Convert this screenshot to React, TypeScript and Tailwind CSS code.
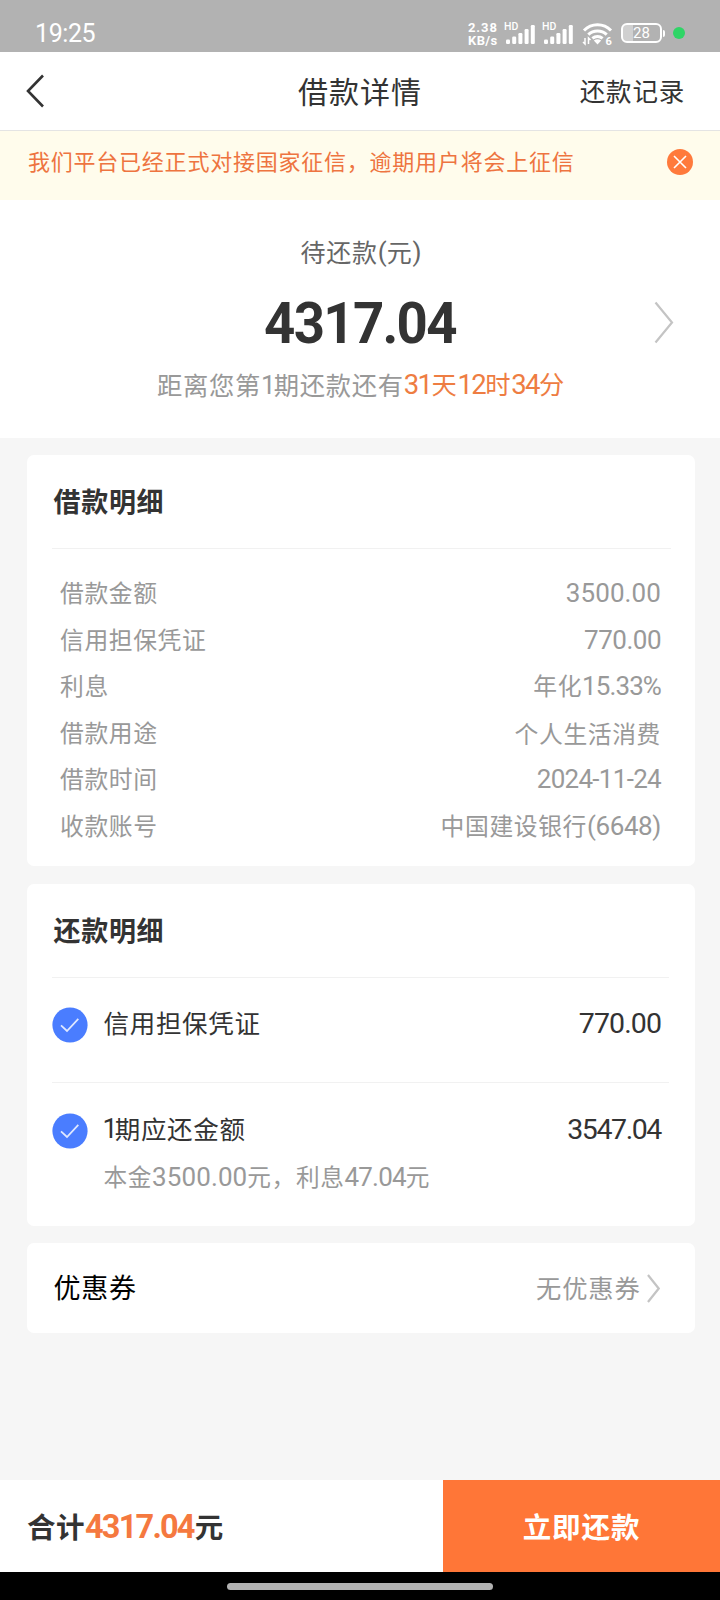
import type { ReactNode } from "react"
import clsx from "clsx"

const loanDetails = [
  { label: "借款金额", value: <Num>3500.00</Num> },
  { label: "信用担保凭证", value: <Num className="text-[26px] tracking-[-0.5px]">770.00</Num> },
  { label: "利息", value: <>年化<Num className="text-[26px] tracking-[-0.9px]">15.33%</Num></> },
  { label: "借款用途", value: "个人生活消费" },
  { label: "借款时间", value: <Num className="text-[26px] tracking-[-0.7px]">2024-11-24</Num> },
  { label: "收款账号", value: <>中国建设银行<Num className="text-[26px] tracking-[-0.4px]">(6648)</Num></> },
]

// Digits run a little larger than the Chinese text around them
function Num({ children, className }: { children: ReactNode; className?: string }) {
  return (
    <span className={clsx("font-['Roboto','Noto_Sans_CJK_SC',sans-serif]", className ?? "text-[26px] tracking-[0.1px]")}>
      {children}
    </span>
  )
}

function Chevron({ className }: { className?: string }) {
  return (
    <svg viewBox="0 0 20 44" preserveAspectRatio="none" fill="none" stroke="#c4c4c4" strokeWidth="2.2" className={className}>
      <path d="M1.5 1.5 L18 22 L1.5 42.5" vectorEffect="non-scaling-stroke" />
    </svg>
  )
}

function Signal() {
  return (
    <svg width="34" height="24" viewBox="0 0 34 24" fill="#fff">
      <text x="0" y="9" fontSize="10.5" fontWeight="500" fontFamily="Roboto, sans-serif">HD</text>
      <rect x="2" y="18.5" width="4" height="4.5" rx="1.2" />
      <rect x="8.2" y="15.5" width="4" height="7.5" rx="1.2" />
      <rect x="14.4" y="12" width="4" height="11" rx="1.2" />
      <rect x="20.6" y="8" width="4" height="15" rx="1.2" />
      <rect x="26.8" y="4" width="4" height="19" rx="1.2" />
    </svg>
  )
}

function Wifi() {
  return (
    <svg width="32" height="30" viewBox="0 -3 32 30" fill="none" stroke="#fff" strokeWidth="3">
      <path d="M2 9.5 A19 19 0 0 1 29 9.5" />
      <path d="M6.3 13.6 A13.3 13.3 0 0 1 24.7 13.6" />
      <path d="M10.4 17.4 A7.6 7.6 0 0 1 20.6 17.4" />
      <path d="M11.8 19.6 Q15.5 17 19.2 19.6 L15.5 23.4 Z" fill="#fff" stroke="none" />
      <path d="M3 17 V23 L1 21 M6.5 23 V17 L8.5 19" strokeWidth="1.5" />
      <text x="23.5" y="23.6" fontSize="11" fontWeight="700" fontFamily="Roboto, sans-serif" fill="#fff" stroke="none">6</text>
    </svg>
  )
}

function StatusBar() {
  return (
    <div className="flex h-[52px] items-start bg-[#b2b2b2] pl-[35px] pt-[21px] text-white">
      <Num className="text-[25px] leading-[25px] tracking-[-0.4px]">19:25</Num>
      <div className="ml-auto flex h-[24px] items-center pr-[35px]">
        <div className="mr-[4px] mt-[2px] w-[32px] font-['Roboto'] text-[13px] font-bold leading-[13px]">
          <div className="tracking-[0.9px]">2.38</div>
          <div className="tracking-[0.4px]">KB/s</div>
        </div>
        <div className="mr-[4px]"><Signal /></div>
        <div className="mr-[6px]"><Signal /></div>
        <div className="mr-[7px]"><Wifi /></div>
        <div className="flex h-[20px] w-[41px] items-center justify-center rounded-[6px] border-2 border-white bg-linear-to-r from-[#d0d0d0] from-28% to-transparent to-28% font-['Roboto'] text-[15px]">
          28
        </div>
        <div className="ml-[1px] h-[7px] w-[2px] rounded-r bg-white" />
        <div className="ml-[8px] h-[12px] w-[12px] rounded-full bg-[#2fd566]" />
      </div>
    </div>
  )
}

function Card({ children, className }: { children: ReactNode; className?: string }) {
  return <section className={clsx("rounded-[7px] bg-white", className)}>{children}</section>
}

function CardTitle({ children }: { children: ReactNode }) {
  return (
    <h2 className="flex h-[94px] items-center border-b border-[#f1f1f1] pl-[2px] text-[27px] font-bold tracking-[0.7px] text-[#333]">
      {children}
    </h2>
  )
}

function CheckIcon() {
  return (
    <svg width="36" height="36" viewBox="0 0 36 36" fill="none" className="shrink-0">
      <circle cx="18" cy="18" r="17.6" fill="#4a7dff" />
      <path d="M9 18.4 L15 24 L26.3 11.8" stroke="#dfe8ff" strokeWidth="1.8" />
    </svg>
  )
}

export default function App() {
  return (
    <div className="flex h-[1600px] w-[720px] flex-col overflow-hidden whitespace-nowrap bg-[#f6f6f6] font-['Noto_Sans_CJK_SC',sans-serif] text-[#333]">
      <StatusBar />

      <header className="grid h-[79px] grid-cols-3 items-center border-b border-[#e4e4e4] bg-white">
        <svg width="20" height="34" viewBox="0 0 20 34" fill="none" stroke="#333" strokeWidth="2.6" className="ml-[25px]">
          <path d="M18 1.5 L3 17 L18 32.5" />
        </svg>
        <h1 className="pb-[2px] text-center text-[30px] tracking-[1px]">借款详情</h1>
        <span className="pb-[2px] pr-[35px] text-right text-[25.5px] tracking-[0.8px]">还款记录</span>
      </header>

      <div className="flex h-[69px] items-center justify-between bg-[#fffcec] pb-[7px] pl-[28px] pr-[27px] text-[22px] tracking-[0.77px] text-[#ee7440]">
        <span className="pb-[3px]">我们平台已经正式对接国家征信，逾期用户将会上征信</span>
        <svg width="26" height="26" viewBox="0 0 26 26" className="shrink-0">
          <circle cx="13" cy="13" r="13" fill="#ff7a3c" />
          <path d="M7 7 L19 19 M19 7 L7 19" stroke="#fff" strokeWidth="1.6" />
        </svg>
      </div>

      <div className="relative flex h-[238px] flex-col items-center bg-white pt-[34px]">
        <div className="flex h-[36px] items-center pl-[2px] text-[25px] tracking-[0.8px] text-[#666]">
          待还款<Num className="text-[26px] tracking-normal">(</Num>元<Num className="text-[26px] tracking-normal">)</Num>
        </div>
        <div className="mt-[23px] flex h-[60px] items-center">
          <Num className="scale-x-94 text-[58px] font-bold leading-[60px] tracking-[-1.8px]">4317.04</Num>
        </div>
        <div className="mt-[14px] flex h-[36px] items-center pl-[2px] text-[25.3px] tracking-[0.7px] text-[#999]">
          距离您第<Num className="text-[26px] tracking-[-2px]">1</Num>期还款还有
          <span className="text-[#ee7d42]">
            <Num className="text-[27.5px] tracking-[-1.6px]">31</Num>天
            <Num className="text-[27.5px] tracking-[-1.6px]">12</Num>时
            <Num className="text-[27.5px] tracking-[-1.6px]">34</Num>分
          </span>
        </div>
        <Chevron className="absolute right-[46px] top-[101px] h-[43px] w-[20px]" />
      </div>

      <main className="flex flex-1 flex-col gap-[17.5px] pl-[26.5px] pr-[25.5px] pt-[17px]">
        <Card className="h-[411px] pl-[25px] pr-[24px]">
          <CardTitle>借款明细</CardTitle>
          <dl className="mt-[20px] pl-[8.5px] pr-[9.5px] text-[23.8px] tracking-[0.6px] text-[#999]">
            {loanDetails.map((row) => (
              <div key={row.label} className="flex h-[46.5px] items-center justify-between">
                <dt>{row.label}</dt>
                <dd className="flex items-baseline pt-[3px]">{row.value}</dd>
              </div>
            ))}
          </dl>
        </Card>

        <Card className="h-[342px] pl-[25px] pr-[26px]">
          <CardTitle>还款明细</CardTitle>
          <div className="flex h-[105px] items-start border-b border-[#f1f1f1] pr-[7.5px] pt-[29px] text-[25.5px] tracking-[0.7px]">
            <div className="mr-[16px]"><CheckIcon /></div>
            <span className="flex h-[32px] items-center">信用担保凭证</span>
            <span className="ml-auto flex h-[32px] items-center pt-[3px]">
              <Num className="text-[28.5px] tracking-[-0.9px]">770.00</Num>
            </span>
          </div>
          <div className="flex items-start pr-[7.5px] pt-[30px] text-[25.5px] tracking-[0.7px]">
            <div className="mr-[15px]"><CheckIcon /></div>
            <div>
              <div className="flex h-[32px] items-center">
                <Num className="pt-[2px] text-[27px] tracking-[-4px]">1</Num>
                <span className="ml-[1px]">期应还金额</span>
              </div>
              <div className="ml-[1px] mt-[13px] flex h-[32px] items-baseline text-[23.7px] tracking-[0.6px] text-[#999]">
                本金<Num>3500.00</Num>元，利息<Num className="text-[26px] tracking-[-0.8px]">47.04</Num>元
              </div>
            </div>
            <span className="ml-auto flex h-[32px] items-center pt-[3px]">
              <Num className="text-[28.5px] tracking-[-1.4px]">3547.04</Num>
            </span>
          </div>
        </Card>

        <Card className="flex h-[90px] items-center pl-[27px] pr-[35px]">
          <span className="pb-[2px] text-[27px] tracking-[0.7px] text-black">优惠券</span>
          <span className="ml-auto pb-px text-[25.3px] tracking-[0.8px] text-[#999]">无优惠券</span>
          <Chevron className="ml-[6px] h-[29px] w-[13px]" />
        </Card>
      </main>

      <footer className="flex h-[92px] shrink-0 bg-white text-[28.5px] font-bold">
        <div className="flex flex-1 items-center pl-[27px] tracking-[0.5px]">
          合计<Num className="pt-[2px] text-[32.5px] font-bold tracking-[-1.8px] text-[#f5793f]">4317.04</Num>
          <span className="ml-[1px]">元</span>
        </div>
        <button className="w-[277px] bg-[#ff7637] tracking-[0.9px] text-white">立即还款</button>
      </footer>
      <div className="flex h-[28px] shrink-0 items-center justify-center bg-black">
        <div className="h-[7px] w-[266px] rounded-full bg-[#b2b2b2]" />
      </div>
    </div>
  )
}
